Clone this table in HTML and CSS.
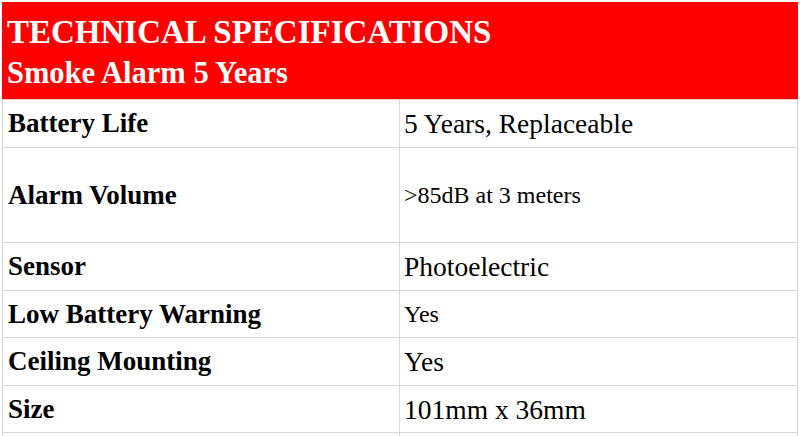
FILE: index.html
```html
<!DOCTYPE html>
<html lang="en">
<head>
<meta charset="utf-8">
<title>Technical Specifications</title>
<link rel="stylesheet" href="styles.css">
</head>
<body>
<div class="spec">
  <div class="spec-head">
    <div class="spec-title">TECHNICAL SPECIFICATIONS</div>
    <div class="spec-sub">Smoke Alarm 5 Years</div>
  </div>
  <div class="row h48">
    <div class="key">Battery Life</div>
    <div class="val">5 Years, Replaceable</div>
  </div>
  <div class="row h95">
    <div class="key">Alarm Volume</div>
    <div class="val small">&gt;85dB at 3 meters</div>
  </div>
  <div class="row h48">
    <div class="key">Sensor</div>
    <div class="val">Photoelectric</div>
  </div>
  <div class="row h47">
    <div class="key">Low Battery Warning</div>
    <div class="val small">Yes</div>
  </div>
  <div class="row h48">
    <div class="key">Ceiling Mounting</div>
    <div class="val">Yes</div>
  </div>
  <div class="row h47">
    <div class="key">Size</div>
    <div class="val">101mm x 36mm</div>
  </div>
  <div class="row h48">
    <div class="key"></div>
    <div class="val"></div>
  </div>
</div>
</body>
</html>
```

FILE: styles.css
```css
html, body {
  margin: 0;
  padding: 0;
  background: #ffffff;
  overflow: hidden;
}

body {
  font-family: "Liberation Serif", "Times New Roman", serif;
  color: #000000;
}

.spec {
  margin: 2px 2px 0 2px;
  border-left: 1px solid #d6d6d6;
  border-right: 1px solid #d6d6d6;
}

.spec-head {
  background: #ff0000;
  color: #ffffff;
  font-weight: bold;
  height: 98px;
  box-sizing: border-box;
  padding: 10px 0 0 5px;
  margin-left: -1px;
  margin-right: -1px;
  border-bottom: 1px solid #f3c9c9;
}

.spec-title {
  font-size: 33px;
  line-height: 40px;
}

.spec-sub {
  font-size: 30.5px;
  line-height: 42px;
}

.row {
  display: grid;
  grid-template-columns: 397px 1fr;
  box-sizing: border-box;
}

.h47 { height: 47px; }
.h48 { height: 48px; }
.h95 { height: 95px; }

.key,
.val {
  display: flex;
  align-items: center;
  border-bottom: 1px solid #d6d6d6;
  font-size: 27px;
  line-height: 31px;
  white-space: nowrap;
}

.key {
  font-weight: bold;
  padding-left: 5px;
  border-right: 1px solid #d6d6d6;
}

.val {
  padding-left: 4px;
  font-size: 27.5px;
}

.val.small {
  font-size: 24px;
}
```
